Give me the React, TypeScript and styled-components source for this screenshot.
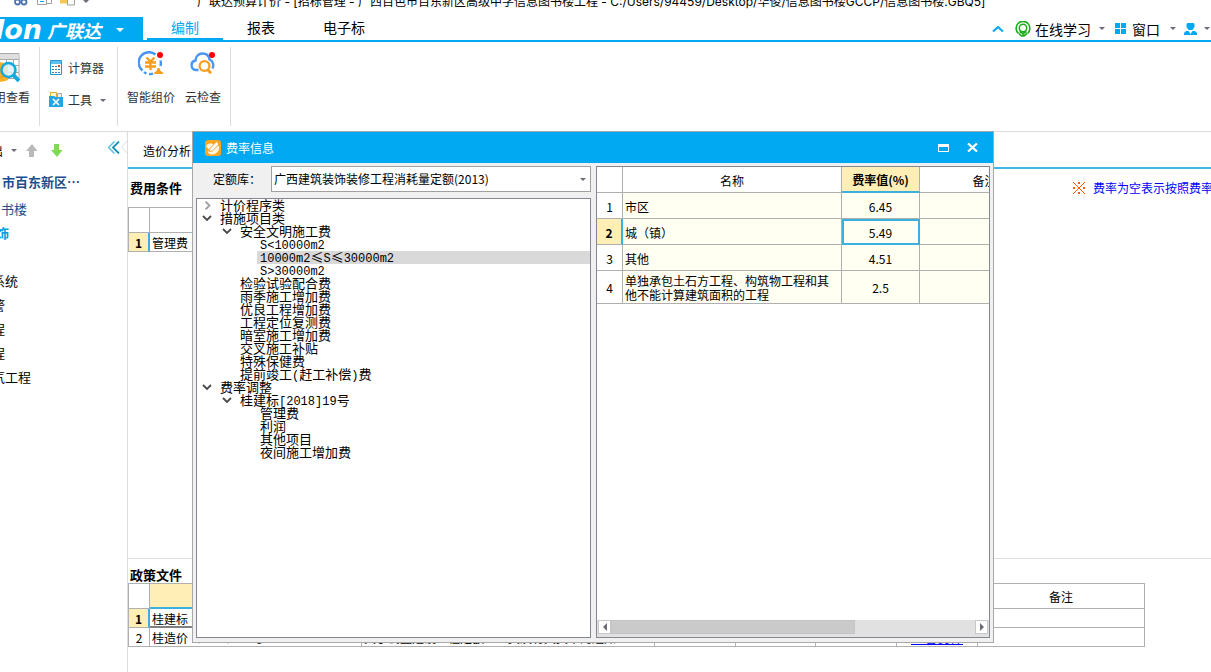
import React from "react";
import styled, { createGlobalStyle, css } from "styled-components";

const BLUE = "#00a9f2";
const CYAN = "#3ab0de";
const LINE = "#b0b0b0";
const SELECTED = "#ffeeb5";

const Global = createGlobalStyle`
  *, *::before, *::after { box-sizing: border-box; }
  body {
    margin: 0;
    background: #fff;
    color: #000;
    font: 12px/16px "Noto Sans CJK SC", sans-serif;
  }
  button { padding: 0; border: 0; background: none; color: inherit; font: inherit; }
  ul { margin: 0; padding: 0; list-style: none; }
  svg { display: block; flex: none; }
`;

const Page = styled.div`
  position: relative;
  display: flex;
  flex-direction: column;
  min-height: 100vh;
  overflow: hidden;
`;

/* ---------- title bar ---------- */

const TitleBar = styled.header`
  display: flex;
  align-items: flex-end;
  height: 10px;
  overflow: hidden;
  white-space: nowrap;
`;
const QuickIcons = styled.div`
  flex: none;
  width: 197px;
  height: 10px;
  padding-left: 14px;
`;
const WindowTitle = styled.span`
  font-family: Inter, "Noto Sans CJK SC", sans-serif;
`;

/* ---------- menu row ---------- */

const MenuRow = styled.div`
  display: flex;
  height: 25px;
  margin-top: 7px;
  border-bottom: 2px solid ${BLUE};
`;
const LogoBlock = styled.button`
  display: flex;
  align-items: center;
  width: 143px;
  height: 25px;
  margin-right: 4px;
  overflow: hidden;
  background: ${BLUE};
  color: #fff;
`;
const LogoLatin = styled.span`
  display: flex;
  justify-content: flex-end;
  width: 42px;
  margin-right: 5px;
  font: italic bold 27px/24px "DejaVu Sans", sans-serif;
`;
const LogoName = styled.span`
  width: 69px;
  font: italic bold 18px/24px "Noto Sans CJK SC", sans-serif;
  text-align: left;
`;
const Tab = styled.button<{ $active?: boolean }>`
  height: ${(p) => (p.$active ? 25 : 23)}px;
  padding: 0 24px;
  font-size: 14px;
  line-height: 21px;
  border-bottom: ${(p) => (p.$active ? `4px solid ${BLUE}` : "2px solid transparent")};
  color: ${(p) => (p.$active ? BLUE : "#000")};
`;
const MenuTools = styled.div`
  display: flex;
  align-items: center;
  margin-left: auto;
  padding-right: 1px;
`;
const MenuTool = styled.button<{ $gap: number; $after: number }>`
  display: flex;
  align-items: center;
  gap: ${(p) => p.$gap}px;
  margin-left: ${(p) => p.$after}px;
  font-size: 14px;
  line-height: 20px;
`;
const ToolLabel = styled.span`
  margin-right: 4px;
`;

/* ---------- ribbon ---------- */

const Ribbon = styled.div`
  display: flex;
  height: 90px;
  padding: 5px 0;
  border-bottom: 1px solid #dcdcdc;
  color: #333;
`;
const RibbonGroup = styled.div<{ $width: number; $column?: boolean }>`
  display: flex;
  flex-direction: ${(p) => (p.$column ? "column" : "row")};
  width: ${(p) => p.$width}px;
  height: 79px;
  padding-top: ${(p) => (p.$column ? 5 : 0)}px;
  border-right: 1px solid #dcdcdc;
`;
const BigButton = styled.button<{ $width: number; $end?: boolean }>`
  display: flex;
  flex-direction: column;
  align-items: ${(p) => (p.$end ? "flex-end" : "center")};
  justify-content: space-between;
  width: ${(p) => p.$width}px;
  height: 58px;
  padding-top: 4px;
  white-space: nowrap;
`;
const CroppedIcon = styled.span`
  display: flex;
  justify-content: flex-end;
  width: 20px;
  margin: 2px 10px 0 0;
`;
const SmallButton = styled.button`
  display: flex;
  align-items: center;
  gap: 4px;
  height: 32px;
  padding-left: 9px;
`;
const SmallLabel = styled.span`
  margin-right: 4px;
`;

/* ---------- work area ---------- */

const Work = styled.div`
  display: flex;
  flex: 1;
`;
const Sidebar = styled.aside`
  flex: none;
  width: 128px;
  overflow: hidden;
  border-right: 1px solid #dcdcdc;
`;
const SideTools = styled.div`
  display: flex;
  align-items: center;
  height: 37px;
  white-space: nowrap;
`;
const SideButton = styled.button<{ $left: number; $clip?: number }>`
  display: flex;
  justify-content: flex-end;
  width: ${(p) => (p.$clip ? p.$clip + "px" : "auto")};
  margin-left: ${(p) => p.$left}px;
`;
const SideFold = styled.div`
  display: flex;
  align-items: flex-start;
  justify-content: space-between;
  flex: 1;
  height: 19px;
  margin-left: 45px;
`;
const SideItem = styled.li<{ $end: number; $tone?: "root" | "link" | "current"; $skip?: boolean }>`
  display: flex;
  justify-content: flex-end;
  width: ${(p) => p.$end}px;
  height: 24px;
  margin-top: ${(p) => (p.$skip ? 24 : 0)}px;
  font-size: 13px;
  line-height: 25px;
  white-space: nowrap;
  ${(p) => p.$tone === "root" && "height: 27px; color: #1f4e8c; font-weight: bold;"}
  ${(p) => p.$tone === "link" && "color: #1f4e8c;"}
  ${(p) => p.$tone === "current" && "color: #00a0dc; font-weight: bold;"}
`;

const Content = styled.main`
  display: flex;
  flex: 1;
  flex-direction: column;
  min-width: 0;
  overflow: hidden;
`;
const SubTabs = styled.div`
  height: 37px;
  padding-left: 15px;
  border-bottom: 2px solid #3fb8e6;
`;
const SubTab = styled.button`
  height: 35px;
  padding-top: 2px;
`;
const Section = styled.section<{ $fixed?: boolean }>`
  flex: ${(p) => (p.$fixed ? "none" : "1")};
  height: ${(p) => (p.$fixed ? "114px" : "auto")};
  border-top: ${(p) => (p.$fixed ? "1px solid #e0e0e0" : "0")};
`;
const SectionHead = styled.div<{ $height: number; $top?: number }>`
  display: flex;
  align-items: center;
  justify-content: space-between;
  height: ${(p) => p.$height}px;
  padding: ${(p) => p.$top ?? 0}px 0 0 2px;
`;
const Heading = styled.h2`
  margin: 0;
  font-size: 13px;
  line-height: 16px;
`;
const Note = styled.p`
  display: flex;
  align-items: center;
  gap: 7px;
  width: 139px;
  margin: 0;
  overflow: hidden;
  color: #0000ff;
  white-space: nowrap;
`;

const Grid = styled.table<{ $framed?: boolean }>`
  width: 0;
  table-layout: fixed;
  border-collapse: separate;
  border-spacing: 0;
  ${(p) => p.$framed && css`
    border-top: 1px solid ${LINE};
    border-left: 1px solid ${LINE};
  `}
`;
const Row = styled.tr<{ $height: number }>`
  height: ${(p) => p.$height}px;
`;
const cell = css`
  padding: 2px 2px 0;
  overflow: hidden;
  border-right: 1px solid ${LINE};
  border-bottom: 1px solid ${LINE};
  line-height: 14px;
`;
const HeadCell = styled.th<{ $on?: boolean; $bold?: boolean }>`
  ${cell}
  font-weight: ${(p) => (p.$bold ? "bold" : "normal")};
  white-space: nowrap;
  background: ${(p) => (p.$on ? SELECTED : "#fff")};
  ${(p) => p.$on && `border-bottom: 2px solid ${CYAN};`}
`;
const NumCell = styled.th<{ $on?: boolean }>`
  ${cell}
  font-weight: ${(p) => (p.$on ? "bold" : "normal")};
  background: ${(p) => (p.$on ? SELECTED : "#fff")};
  ${(p) => p.$on && `border-right: 2px solid ${CYAN};`}
`;
const Cell = styled.td<{ $tint?: boolean; $center?: boolean; $focus?: boolean; $wrap?: boolean; $under?: boolean }>`
  ${cell}
  text-align: ${(p) => (p.$center ? "center" : "left")};
  white-space: ${(p) => (p.$wrap ? "normal" : "nowrap")};
  background: ${(p) => (p.$tint ? "#fffff2" : "#fff")};
  ${(p) => p.$focus && `outline: 2px solid ${CYAN}; outline-offset: -2px;`}
  ${(p) => p.$under && "border-bottom: 2px solid #808080;"}
`;
const DocLink = styled.a`
  color: #0000ff;
  font-size: 13px;
`;

/* ---------- rate dialog ---------- */

const Dialog = styled.div`
  position: absolute;
  top: 131px;
  right: 217px;
  bottom: 29px;
  left: 192px;
  display: flex;
  flex-direction: column;
  border: 1px solid #a8a8a8;
  background: #f0f0f0;
`;
const DialogTitle = styled.div`
  display: flex;
  flex: none;
  align-items: center;
  height: 31px;
  padding: 0 15px 0 12px;
  background: ${BLUE};
  color: #fff;
`;
const DialogName = styled.h1`
  flex: 1;
  margin: 0 0 0 5px;
  font-size: 12px;
  font-weight: normal;
`;
const DialogButton = styled.button`
  margin-left: 18px;
`;
const DialogBody = styled.div`
  display: flex;
  flex: 1;
  gap: 5px;
  min-height: 0;
  padding: 3px 3px 4px;
`;
const LeftPane = styled.div`
  display: flex;
  flex: none;
  flex-direction: column;
  gap: 6px;
  width: 395px;
`;
const LibraryRow = styled.div`
  display: flex;
  align-items: center;
  height: 26px;
  padding-left: 17px;
`;
const LibraryLabel = styled.label`
  width: 58px;
`;
const SelectWrap = styled.div`
  position: relative;
  flex: 1;
`;
const Select = styled.select`
  display: block;
  width: 100%;
  height: 26px;
  padding: 0 16px 0 2px;
  appearance: none;
  border: 1px solid #a0a0a0;
  border-radius: 0;
  background: #fff;
  color: #000;
  font: inherit;
`;
const SelectArrow = styled.span`
  position: absolute;
  top: 12px;
  right: 5px;
  pointer-events: none;
`;
const Tree = styled.ul`
  flex: 1;
  overflow: hidden;
  border: 1px solid #828790;
  background: #fff;
`;
const TreeItem = styled.li<{ $level: number }>`
  display: flex;
  align-items: center;
  height: 13px;
  padding-left: ${(p) => p.$level * 20}px;
  font-size: 13px;
  line-height: 11px;
  white-space: nowrap;
`;
const Twisty = styled.span`
  display: flex;
  justify-content: center;
  width: 20px;
`;
const TreeLabel = styled.span<{ $on?: boolean }>`
  flex: 1;
  height: 13px;
  padding-left: 3px;
  background: ${(p) => (p.$on ? "#d9d9d9" : "transparent")};
`;
const Half = styled.span`
  font: 12px/11px "Liberation Mono", monospace;
`;
const RightPane = styled.div`
  display: flex;
  flex: 1;
  flex-direction: column;
  justify-content: space-between;
  min-width: 0;
  overflow: hidden;
  border: 1px solid #828790;
  background: #fff;
`;
const ScrollBar = styled.div`
  display: flex;
  flex: none;
  height: 17px;
  padding: 0 1px 3px;
  background: #e1e1e1;
`;
const ScrollButton = styled.button`
  display: flex;
  align-items: center;
  justify-content: center;
  width: 13px;
  border: 1px solid #c8c8c8;
  background: #fff;
`;
const ScrollTrack = styled.div`
  flex: 1;
`;
const ScrollThumb = styled.div`
  width: 67%;
  height: 14px;
  border: 1px solid #c4c4c4;
  background: #cacaca;
`;

/* ---------- icons ---------- */

const Caret = ({ color = "#6b6b78", size = 6 }: { color?: string; size?: number }) => (
  <svg width={size} height={size / 2} viewBox="0 0 6 3"><path d="M0 0h6L3 3z" fill={color} /></svg>
);
const QuickBar = () => (
  <svg width="76" height="7" viewBox="0 0 76 7" fill="none">
    <g stroke="#4a72b0" strokeWidth="1.800"><circle cx="3.500" cy="2" r="2.500" /><circle cx="10" cy="2" r="2.500" /></g>
    <path d="M23.500 0v4.500h9V0M33 3.500h4.500V0" stroke="#a0a0a0" />
    <path d="M26 1.500h4" stroke={BLUE} />
    <path d="M46 0h7v3.500h-7z" fill="#f7c948" />
    <path d="M53.500 0v5h7V0" stroke="#a0a0a0" />
    <path d="M69 0h6l-3 3z" fill="#6b6b78" />
  </svg>
);
const ChevronUp = () => (
  <svg width="12" height="6" viewBox="0 0 12 6"><path d="M1 5.500 6 1l5 4.500" fill="none" stroke={BLUE} strokeWidth="2" /></svg>
);
const Headset = () => (
  <svg width="16" height="16" viewBox="0 0 16 16" fill="none" stroke="#1aad19">
    <path d="M3.500 12.500A6.900 6.900 0 1 1 12.500 12.500" strokeWidth="1.600" />
    <circle cx="8" cy="7" r="3.700" strokeWidth="1.500" />
    <path d="m4.500 10.500 3.500 2 3.500-2M4 12.500l2.500 2.500H9l3-2.500M8 12.500v2.500" strokeWidth="1.700" />
  </svg>
);
const Windows = () => (
  <svg width="11" height="11" viewBox="0 0 11 11" fill={BLUE}>
    <path d="M0 0h5v5H0zM6 0h5v5H6zM0 6h5v5H0zM6 6h5v5H6z" />
  </svg>
);
const User = () => (
  <svg width="13" height="12" viewBox="0 0 13 12" fill={BLUE}>
    <path d="M3.500 0h6l1 1v3L8.500 7h-4l-2-3V1zM2 8h2.500l2 3 2-3H11l2 2v2H0v-2z" />
  </svg>
);
const TableSearch = () => (
  <svg width="44" height="30" viewBox="0 0 44 30">
    <path d="M17 .5h26v25H17z" fill="#fff" stroke="#a9a9a9" />
    <path d="M17 1h25.500v5H17z" fill="#dedede" />
    <path d="M17 6.500h26M17 12.500h26M17 19.500h26M30.500 6v20M37.500 6v20" stroke="#a9a9a9" fill="none" />
    <path d="M14 11c6-3 14-2 18 1v15c-6 3-14 2-18-1z" fill="#fdb022" />
    <path d="M14 17c6 3 12 3 18 0M14 22c6 3 12 3 18 0" stroke="#e0901a" fill="none" />
    <circle cx="32.500" cy="17" r="7" fill="#d9f2fb" fillOpacity=".85" stroke="#12a9e0" strokeWidth="2.500" />
    <path d="m37.500 22 5.500 6" stroke="#12a9e0" strokeWidth="4" />
  </svg>
);
const Calculator = () => (
  <svg width="15" height="16" viewBox="0 0 15 16">
    <path d="M.5.500h11v14H.5z" transform="translate(1 0)" fill="#fff" stroke="#2398d0" />
    <path d="M2 1h10v3H2z" fill="#5cc1ec" />
    <path d="M3 6h2v1H3zM6 6h2v1H6zM3 9h2v1H3zM6 9h2v1H6zM9 9h2v1H9zM3 12h2v1H3zM6 12h2v1H6zM9 12h2v1H9z" fill="#3a7fb5" />
    <path d="M9 5h2v2H9z" fill="#e5483a" />
  </svg>
);
const Toolbox = () => (
  <svg width="15" height="16" viewBox="0 0 15 16">
    <path d="M1.500 5V.5h6V5" fill="#fff5d6" stroke="#dca837" />
    <path d="M8.500 6V1.500h4V6" fill="#eee" stroke="#aaa" />
    <path d="M0 4h5l2 1h7v10H0z" fill="#22a7e4" />
    <path d="m4 7 6 6M10 7l-6 6" stroke="#fff" strokeWidth="1.600" />
  </svg>
);
const SmartPrice = () => (
  <svg width="26" height="26" viewBox="0 0 26 26" fill="none">
    <path d="M4.500 19.500A10.300 10.300 0 0 1 17.500 3.500M22.500 9.500a10.300 10.300 0 0 1 0 5.500M6 21q1 1 2.500 1.500M11 23q2 .3 4-.300" stroke="#4795f6" strokeWidth="2.400" />
    <path d="m8.500 6.500 4 4 4-4M7 11.500h11M7 15.500h11M12.500 10v9" stroke="#fa9d1c" strokeWidth="2.400" />
    <path d="M16 23c0-2.500 3-2 3-4.500 0-2 3-2 3 0 0 2.500 3.500 2 3.500 4.500z" fill="#fa9d1c" />
    <circle cx="22" cy="4" r="3" fill="#f00" />
  </svg>
);
const CloudCheck = () => (
  <svg width="26" height="26" viewBox="0 0 26 26" fill="none">
    <path d="M8.500 19H6a4.800 4.800 0 0 1-.5-9.500C5.500 5.500 8.500 2.500 12.500 2.500s6.500 2.500 7 6c4 1.500 4.500 6 3 9" stroke="#4795f6" strokeWidth="2.400" />
    <circle cx="14.500" cy="15" r="4.900" stroke="#fa9d1c" strokeWidth="2.300" />
    <path d="m18 19 3 3.300" stroke="#fa9d1c" strokeWidth="2.800" />
    <circle cx="22" cy="4" r="3" fill="#f00" />
  </svg>
);
const Arrow = ({ color, down }: { color: string; down?: boolean }) => (
  <svg width="12" height="13" viewBox="0 0 12 13">
    <path d={down ? "M3 0h5v6h3.500L6 13 0 6h3z" : "M3 13h5V7h3.500L6 0 0 7h3z"} fill={color} />
  </svg>
);
const Collapse = () => (
  <svg width="12" height="13" viewBox="0 0 12 13" fill="none">
    <path d="M6.500.5l-6 6 6 6" stroke="#5cc4e4" strokeWidth="1.500" />
    <path d="M11 .5l-6 6 6 6" stroke="#178fb5" strokeWidth="1.800" />
  </svg>
);
const Notch = () => (
  <svg width="6" height="12" viewBox="0 0 6 12"><path d="M6 0 .7 6 6 12" fill="none" stroke="#dcdcdc" /></svg>
);
const Reference = () => (
  <svg width="14" height="14" viewBox="0 0 14 14">
    <path d="m1 1 12 12M13 1 1 13" stroke="#ff5a00" />
    <path d="M6 1h2v2H6zM6 11h2v2H6zM1 6h2v2H1zM11 6h2v2h-2z" fill="#ff5a00" />
  </svg>
);
const DialogIcon = () => (
  <svg width="16" height="16" viewBox="0 0 16 16">
    <rect width="16" height="16" rx="3" fill="#fba521" />
    <path d="M1.500 5.500C3 3 7 3 9 5l5 1c1 4-2 8.500-7 8.500-2 0-4-1-4.500-3 2 0 2-1 1-2.500S1 7 1.500 5.500z" fill="#fff6de" />
    <path d="m5 8.500 6.500-7L14 4l-6.500 7-3 .500z" fill="#fff" stroke="#e89218" strokeWidth=".8" />
  </svg>
);
const TreeArrow = ({ open }: { open: boolean }) =>
  open ? (
    <svg width="10" height="7" viewBox="0 0 10 7"><path d="m1 1 4 4 4-4" fill="none" stroke="#4a4a4a" strokeWidth="1.800" /></svg>
  ) : (
    <svg width="7" height="9" viewBox="0 0 7 9"><path d="m1.500.5 4 4-4 4" fill="none" stroke="#a0a0a0" strokeWidth="1.800" /></svg>
  );

/* ---------- data ---------- */

type Node = { level: number; text: string; open?: boolean; on?: boolean };
const nodes: Node[] = [
  { level: 0, text: "计价程序类", open: false },
  { level: 0, text: "措施项目类", open: true },
  { level: 1, text: "安全文明施工费", open: true },
  { level: 2, text: "S<10000m2" },
  { level: 2, text: "10000m2≤S≤30000m2", on: true },
  { level: 2, text: "S>30000m2" },
  { level: 1, text: "检验试验配合费" },
  { level: 1, text: "雨季施工增加费" },
  { level: 1, text: "优良工程增加费" },
  { level: 1, text: "工程定位复测费" },
  { level: 1, text: "暗室施工增加费" },
  { level: 1, text: "交叉施工补贴" },
  { level: 1, text: "特殊保健费" },
  { level: 1, text: "提前竣工(赶工补偿)费" },
  { level: 0, text: "费率调整", open: true },
  { level: 1, text: "桂建标[2018]19号", open: true },
  { level: 2, text: "管理费" },
  { level: 2, text: "利润" },
  { level: 2, text: "其他项目" },
  { level: 2, text: "夜间施工增加费" },
];

const rates = [
  { name: "市区", rate: "6.45" },
  { name: "城（镇）", rate: "5.49" },
  { name: "其他", rate: "4.51" },
  { name: "单独承包土石方工程、构筑物工程和其他不能计算建筑面积的工程", rate: "2.5" },
];

const policyColumns = [21, 212, 293, 81, 80, 81, 81, 167];

/** Sets runs of ASCII in the half-width face. */
const Mixed = ({ text }: { text: string }) => (
  <>{text.split(/([\x20-\x7e]+)/).map((part, i) => (i % 2 ? <Half key={i}>{part}</Half> : part))}</>
);

export default function App() {
  return (
    <Page>
      <Global />
      <TitleBar>
        <QuickIcons><QuickBar /></QuickIcons>
        <WindowTitle>
          广联达预算计价 - [招标管理 - 广西百色市百东新区高级中学信息图书楼工程 - C:/Users/94459/Desktop/华俊/信息图书楼GCCP/信息图书楼.GBQ5]
        </WindowTitle>
      </TitleBar>

      <MenuRow>
        <LogoBlock>
          <LogoLatin>Glodon</LogoLatin>
          <LogoName>广联达</LogoName>
          <Caret color="#fff" size={8} />
        </LogoBlock>
        <Tab $active>编制</Tab>
        <Tab>报表</Tab>
        <Tab>电子标</Tab>
        <MenuTools>
          <MenuTool $gap={0} $after={0} aria-label="收起"><ChevronUp /></MenuTool>
          <MenuTool $gap={4} $after={11}><Headset /><ToolLabel>在线学习</ToolLabel><Caret /></MenuTool>
          <MenuTool $gap={6} $after={10}><Windows /><ToolLabel>窗口</ToolLabel><Caret /></MenuTool>
          <MenuTool $gap={7} $after={8} aria-label="用户"><User /><Caret /></MenuTool>
        </MenuTools>
      </MenuRow>

      <Ribbon>
        <RibbonGroup $width={40}>
          <BigButton $width={30} $end>
            <CroppedIcon><TableSearch /></CroppedIcon>
            费用查看
          </BigButton>
        </RibbonGroup>
        <RibbonGroup $width={78} $column>
          <SmallButton><Calculator />计算器</SmallButton>
          <SmallButton><Toolbox /><SmallLabel>工具</SmallLabel><Caret /></SmallButton>
        </RibbonGroup>
        <RibbonGroup $width={113}>
          <BigButton $width={66}><SmartPrice />智能组价</BigButton>
          <BigButton $width={38}><CloudCheck />云检查</BigButton>
        </RibbonGroup>
      </Ribbon>

      <Work>
        <Sidebar>
          <SideTools>
            <SideButton $left={0} $clip={3}>导出</SideButton>
            <SideButton $left={8} aria-label="更多"><Caret /></SideButton>
            <SideButton $left={9} aria-label="上移"><Arrow color="#b9b9b9" /></SideButton>
            <SideButton $left={13} aria-label="下移"><Arrow color="#7ed957" down /></SideButton>
            <SideFold>
              <SideButton $left={0} aria-label="折叠"><Collapse /></SideButton>
              <Notch />
            </SideFold>
          </SideTools>
          <ul>
            <SideItem $end={80} $tone="root">市百东新区…</SideItem>
            <SideItem $end={27} $tone="link">书楼</SideItem>
            <SideItem $end={9} $tone="current">装饰</SideItem>
            <SideItem $end={18} $skip>消防系统</SideItem>
            <SideItem $end={5}>火灾报警</SideItem>
            <SideItem $end={5}>给排水工程</SideItem>
            <SideItem $end={5}>通风工程</SideItem>
            <SideItem $end={31}>电气工程</SideItem>
          </ul>
        </Sidebar>

        <Content>
          <SubTabs><SubTab>造价分析</SubTab></SubTabs>
          <Section>
            <SectionHead $height={38}>
              <Heading>费用条件</Heading>
              <Note><Reference />费率为空表示按照费率取值</Note>
            </SectionHead>
            <Grid $framed>
              <colgroup><col style={{ width: 21 }} /><col style={{ width: 240 }} /></colgroup>
              <tbody>
                <Row $height={25}><HeadCell /><HeadCell /></Row>
                <Row $height={19}><NumCell $on>1</NumCell><Cell>管理费·利润</Cell></Row>
              </tbody>
            </Grid>
          </Section>
          <Section $fixed>
            <SectionHead $height={24} $top={7}><Heading>政策文件</Heading></SectionHead>
            <Grid $framed>
              <colgroup>{policyColumns.map((w, i) => <col key={i} style={{ width: w }} />)}</colgroup>
              <tbody>
                <Row $height={25}>
                  <HeadCell /><HeadCell $on /><HeadCell /><HeadCell /><HeadCell /><HeadCell /><HeadCell /><HeadCell>备注</HeadCell>
                </Row>
                <Row $height={19}>
                  <NumCell $on>1</NumCell><Cell $under>桂建标〔2018〕19号</Cell><Cell /><Cell /><Cell /><Cell /><Cell /><Cell />
                </Row>
                <Row $height={19}>
                  <NumCell>2</NumCell><Cell>桂造价〔2018〕10号</Cell><Cell>关于调整建设工程定额人工费及有关费率的通知</Cell>
                  <Cell /><Cell /><Cell /><Cell $center><DocLink href="#policy">查看文件</DocLink></Cell><Cell />
                </Row>
              </tbody>
            </Grid>
          </Section>
        </Content>
      </Work>

      <Dialog role="dialog" aria-labelledby="dialog-name">
        <DialogTitle>
          <DialogIcon />
          <DialogName id="dialog-name">费率信息</DialogName>
          <DialogButton aria-label="最大化">
            <svg width="11" height="8" viewBox="0 0 11 8"><path d="M.5.500h10v7H.5z" fill="none" stroke="#fff" /><path d="M0 0h11v3H0z" fill="#fff" /></svg>
          </DialogButton>
          <DialogButton aria-label="关闭">
            <svg width="11" height="9" viewBox="0 0 11 9"><path d="m1 .5 9 8M10 .5l-9 8" stroke="#fff" strokeWidth="2.200" /></svg>
          </DialogButton>
        </DialogTitle>
        <DialogBody>
          <LeftPane>
            <LibraryRow>
              <LibraryLabel htmlFor="library">定额库：</LibraryLabel>
              <SelectWrap>
                <Select id="library" defaultValue="gx2013">
                  <option value="gx2013">广西建筑装饰装修工程消耗量定额(2013)</option>
                </Select>
                <SelectArrow><Caret /></SelectArrow>
              </SelectWrap>
            </LibraryRow>
            <Tree role="tree">
              {nodes.map((n) => (
                <TreeItem key={n.text} $level={n.level} role="treeitem" aria-selected={!!n.on}>
                  <Twisty>{n.open !== undefined && <TreeArrow open={n.open} />}</Twisty>
                  <TreeLabel $on={n.on}><Mixed text={n.text} /></TreeLabel>
                </TreeItem>
              ))}
            </Tree>
          </LeftPane>
          <RightPane>
            <Grid>
              <colgroup>
                <col style={{ width: 26 }} /><col style={{ width: 219 }} /><col style={{ width: 78 }} /><col style={{ width: 130 }} />
              </colgroup>
              <thead>
                <Row $height={26}><HeadCell /><HeadCell>名称</HeadCell><HeadCell $on $bold>费率值(%)</HeadCell><HeadCell>备注</HeadCell></Row>
              </thead>
              <tbody>
                {rates.map((r, i) => (
                  <Row key={r.name} $height={i === 3 ? 33 : 26}>
                    <NumCell $on={i === 1}>{i + 1}</NumCell>
                    <Cell $tint $wrap>{r.name}</Cell>
                    <Cell $tint $center $focus={i === 1}>{r.rate}</Cell>
                    <Cell $tint />
                  </Row>
                ))}
              </tbody>
            </Grid>
            <ScrollBar>
              <ScrollButton aria-label="向左"><svg width="4" height="8" viewBox="0 0 4 8"><path d="M4 0v8L0 4z" fill="#6b6b78" /></svg></ScrollButton>
              <ScrollTrack><ScrollThumb /></ScrollTrack>
              <ScrollButton aria-label="向右"><svg width="4" height="8" viewBox="0 0 4 8"><path d="M0 0v8l4-4z" fill="#6b6b78" /></svg></ScrollButton>
            </ScrollBar>
          </RightPane>
        </DialogBody>
      </Dialog>
    </Page>
  );
}
